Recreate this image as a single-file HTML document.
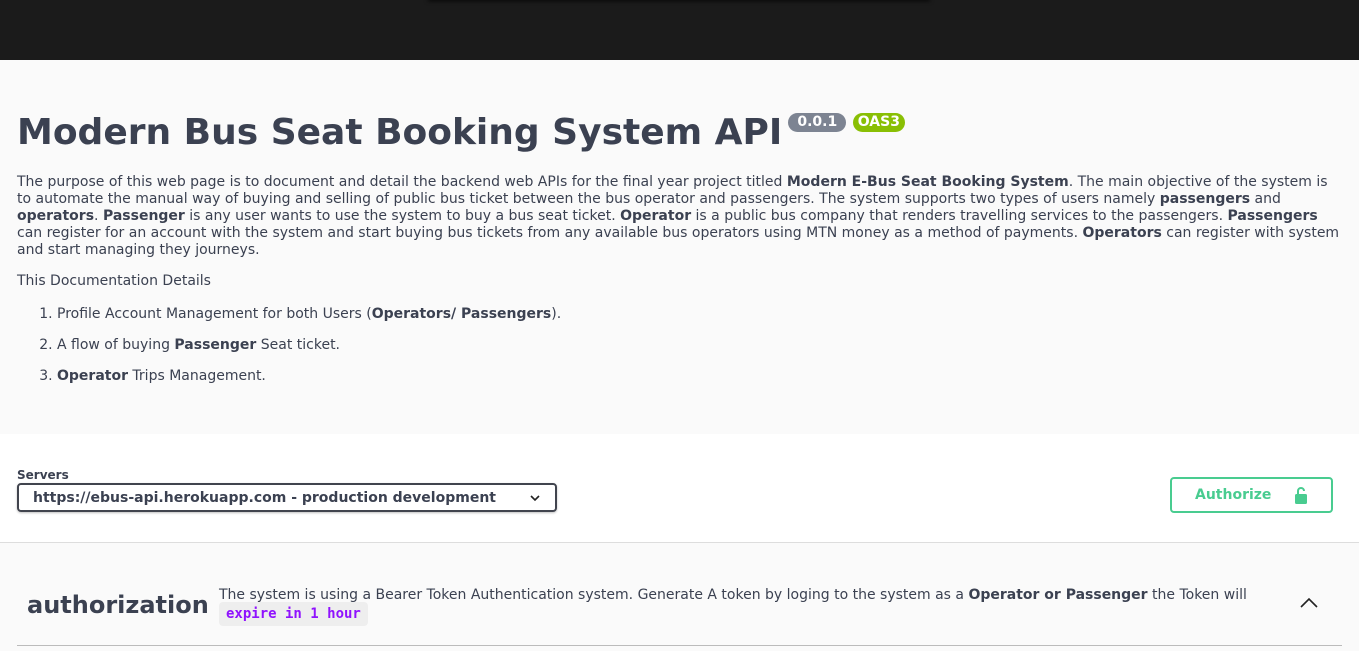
<!DOCTYPE html>
<html><head><style>
body{margin:0;width:1359px;height:651px;overflow:hidden;font-family:"DejaVu Sans",sans-serif;color:#3b4151;background:#fafafa}
.top{height:60px;background:#1b1b1b;position:relative}
.top .sh{position:absolute;left:428px;width:502px;top:-4px;height:4px;box-shadow:0 1px 4px rgba(0,0,0,.8)}
.info{padding:0 17px;height:374px;position:relative}
h1{margin:0;position:absolute;top:50px;left:17px;font-size:36px;font-weight:bold;line-height:46px;color:#3b4151;white-space:nowrap}
.badge{display:inline-block;vertical-align:top;margin-top:3px;font-size:14px;color:#fff;border-radius:57px;padding:1px 9px;line-height:17px;font-weight:bold}
.desc{position:absolute;top:114px;left:17px;width:1326px;font-size:14px;line-height:17px}
.desc p{margin:0}
ol{margin:16px 0 0;padding-left:40px}
ol li{margin-bottom:14px}
.srv{background:#fff;height:108px;border-bottom:1px solid #ddd;position:relative}
.lbl{position:absolute;left:17px;top:34px;font-size:12px;font-weight:bold}
.sel{position:absolute;left:17px;top:49px;height:25px;border:2px solid #41444e;border-radius:4px;box-shadow:0 1px 2px rgba(0,0,0,.25);font-size:14px;font-weight:bold;line-height:27px;padding-left:14px;box-sizing:content-box;width:522px}
.auth{position:absolute;left:1170px;top:43px;height:32px;border:2px solid #49cc90;border-radius:4px;color:#49cc90;font-weight:bold;font-size:14px;line-height:32px;padding-left:23px;box-sizing:content-box;width:136px}
.tag{position:relative;height:100px}
.tag h3{position:absolute;left:27px;top:48px;margin:0;font-size:24px;font-weight:bold}
.tag .d{position:absolute;left:219px;top:44px;font-size:14px;line-height:17px;width:1060px}
code{display:inline-block;margin-top:-2px;background:#eee;color:#9012fe;font-family:"DejaVu Sans Mono",monospace;font-weight:bold;font-size:14px;padding:2px 7px;border-radius:4px;line-height:20px}
.line{position:absolute;left:17px;right:17px;top:102px;border-top:1px solid #bbb}
</style></head><body>
<div class="top"><div class="sh"></div></div>
<div class="info">
<h1>Modern Bus Seat Booking System API<span class="badge" style="background:#7d8492;margin-left:6px">0.0.1</span> <span class="badge" style="background:#89bf04;padding:1px 5px;margin-left:-6px">OAS3</span></h1>
<div class="desc"><p>The purpose of this web page is to document and detail the backend web APIs for the final year project titled <b>Modern E-Bus Seat Booking System</b>. The main objective of the system is to automate the manual way of buying and selling of public bus ticket between the bus operator and passengers. The system supports two types of users namely <b>passengers</b> and <b>operators</b>. <b>Passenger</b> is any user wants to use the system to buy a bus seat ticket. <b>Operator</b> is a public bus company that renders travelling services to the passengers. <b>Passengers</b> can register for an account with the system and start buying bus tickets from any available bus operators using MTN money as a method of payments. <b>Operators</b> can register with system and start managing they journeys.</p>
<p style="margin-top:14px">This Documentation Details</p>
<ol><li>Profile Account Management for both Users (<b>Operators/ Passengers</b>).</li><li>A flow of buying <b>Passenger</b> Seat ticket.</li><li><b>Operator</b> Trips Management.</li></ol></div>
</div>
<div class="srv"><div class="lbl">Servers</div>
<div class="sel">https://ebus-api.herokuapp.com - production development<svg style="position:absolute;right:14px;top:9px" width="12" height="8" viewBox="0 0 12 8"><path d="M2 2l4 4 4-4" fill="none" stroke="#222" stroke-width="1.6"/></svg></div>
<div class="auth">Authorize<svg style="position:absolute;left:122px;top:7px" width="14" height="18" viewBox="0 0 14 18"><path d="M4 8V5a3 3 0 0 1 6 0" fill="none" stroke="#49cc90" stroke-width="2"/><rect x="1" y="8" width="12" height="10" rx="1.5" fill="#49cc90"/></svg></div>
</div>
<div class="tag"><h3>authorization</h3>
<div class="d">The system is using a Bearer Token Authentication system. Generate A token by loging to the system as a <b>Operator or Passenger</b> the Token will<br><code>expire in 1 hour</code></div>
<svg style="position:absolute;left:1299px;top:52px" width="20" height="14" viewBox="0 0 20 14"><path d="M2 12L10 4l8 8" fill="none" stroke="#222" stroke-width="1.6"/></svg>
<div class="line"></div></div>
</body></html>
